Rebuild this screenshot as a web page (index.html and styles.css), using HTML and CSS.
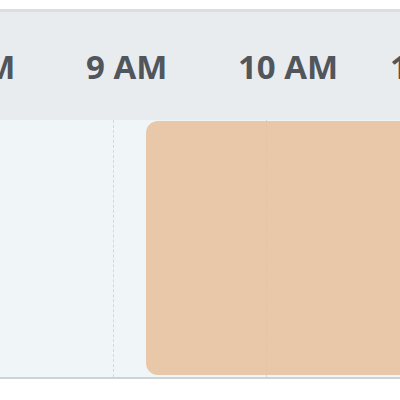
FILE: index.html
```html
<!DOCTYPE html>
<html lang="en">
<head>
<meta charset="UTF-8" />
<meta name="viewport" content="width=device-width, initial-scale=1" />
<title>Schedule</title>
<link rel="stylesheet" href="styles.css">
</head>
<body>

<section class="schedule">
  <div class="hours">
    <div class="hour">8 AM</div>
    <div class="hour">9 AM</div>
    <div class="hour">10 AM</div>
    <div class="hour">11 AM</div>
  </div>

  <div class="lane">
    <div class="slots">
      <div class="slot"></div>
      <div class="slot"></div>
      <div class="slot"></div>
      <div class="slot"></div>
    </div>
    <div class="event"></div>
  </div>
</section>

</body>
</html>
```

FILE: styles.css
```css
body {
  margin: 0;
  background: #ffffff;
  font-family: 'Open Sans', 'DejaVu Sans', sans-serif;
  overflow: hidden;
}
.schedule {
  margin-top: 9px;
  border-top: 3px solid #dcdfe2;
  border-bottom: 2px solid #cdd2d6;
  overflow: hidden;
}
.hours {
  height: 108px;
  background: #e9ecef;
  display: flex;
  align-items: center;
  margin-left: -66px;
}
.hour {
  flex: 0 0 152px;
  font-size: 33px;
  font-weight: 700;
  color: #50565b;
  white-space: nowrap;
}
.lane {
  position: relative;
  height: 257px;
  background: #f0f5f8;
}
.slots {
  display: flex;
  height: 100%;
  margin-left: -39px;
}
.slot {
  flex: 0 0 152px;
  border-right: 1px dashed #d3d8dc;
}
.event {
  position: absolute;
  left: 146px;
  right: -20px;
  top: 1px;
  bottom: 2px;
  background: rgba(232, 191, 155, 0.85);
  border-radius: 12px;
}
```
